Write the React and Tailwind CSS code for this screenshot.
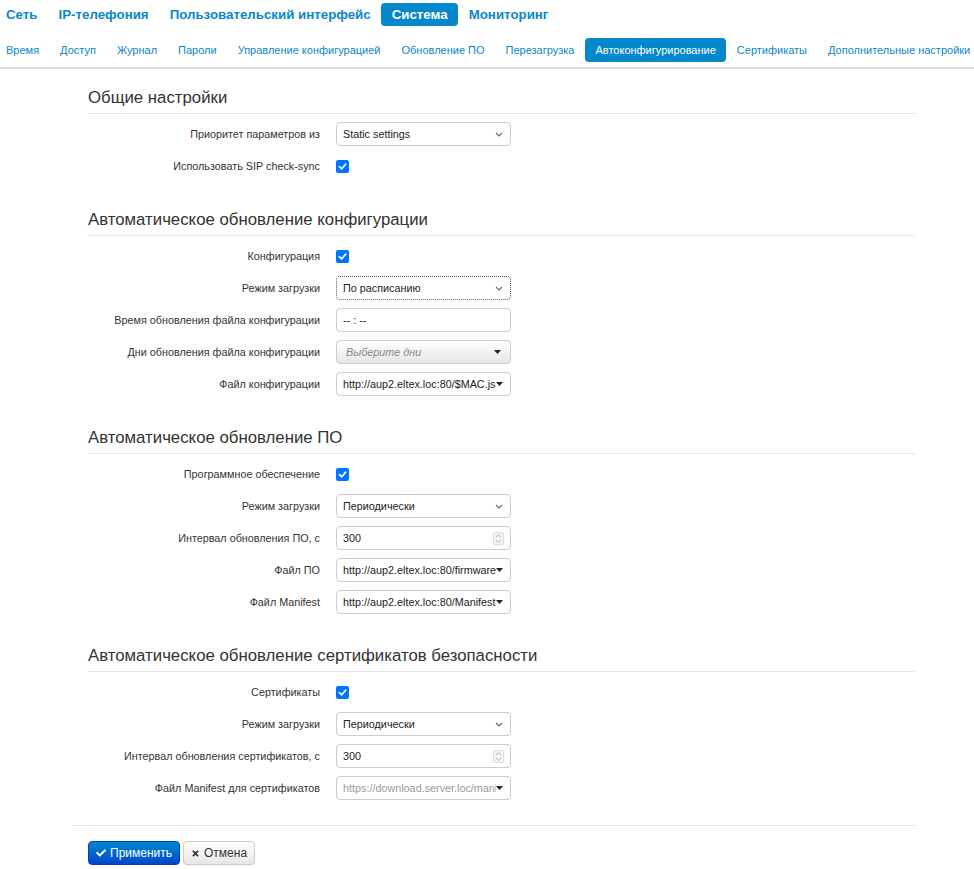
import React from "react";
import { FaCheck, FaTimes } from "react-icons/fa";

const font = { fontFamily: '"Liberation Sans", Arial, sans-serif' };

function Check() {
  return (
    <div className="w-[13px] h-[13px] rounded-[2px] bg-[#0075ff] flex items-center justify-center">
      <svg width="9" height="9" viewBox="0 0 10 10">
        <path d="M1.5 5.2 L4 7.6 L8.6 2.4" fill="none" stroke="white" strokeWidth="1.8" strokeLinecap="round" strokeLinejoin="round" />
      </svg>
    </div>
  );
}

function Chevron() {
  return (
    <svg width="8" height="5" viewBox="0 0 8 5" className="shrink-0">
      <path d="M1 1 L4 4 L7 1" fill="none" stroke="#666" strokeWidth="1.1" />
    </svg>
  );
}

function Caret() {
  return (
    <svg width="7" height="4" viewBox="0 0 7 4" className="shrink-0">
      <path d="M0 0 L7 0 L3.5 4 Z" fill="#222" />
    </svg>
  );
}

function Select({ value, dotted }) {
  return (
    <div
      className={
        "w-[175px] h-[24px] rounded-[4px] bg-white flex items-center pl-[6px] pr-[7px] justify-between text-[10.8px] text-[#222] " +
        (dotted ? "border border-dotted border-[#555]" : "border border-[#ccc]")
      }
    >
      <span>{value}</span>
      <Chevron />
    </div>
  );
}

function FileSelect({ value, muted }) {
  return (
    <div className="w-[175px] h-[24px] rounded-[4px] bg-white border border-[#ccc] flex items-center pl-[6px] pr-[7px] text-[10.8px]">
      <span className={"flex-1 min-w-0 overflow-hidden whitespace-nowrap " + (muted ? "text-[#999]" : "text-[#222]")}>{value}</span>
      <Caret />
    </div>
  );
}

function TextInput({ value }) {
  return (
    <div className="w-[175px] h-[24px] rounded-[4px] bg-white border border-[#ccc] flex items-center pl-[6px] text-[10.8px] text-[#222]">
      {value}
    </div>
  );
}

function NumberInput({ value }) {
  return (
    <div className="w-[175px] h-[24px] rounded-[4px] bg-white border border-[#ccc] flex items-center pl-[6px] pr-[6px] justify-between text-[10.8px] text-[#222]">
      <span>{value}</span>
      <svg width="11" height="13" viewBox="0 0 11 13">
        <rect x="0.5" y="0.5" width="10" height="12" rx="1.5" fill="#f3f3f3" stroke="#ddd" />
        <path d="M3 5 L5.5 2.8 L8 5" fill="none" stroke="#aaa" strokeWidth="0.9" />
        <path d="M3 8 L5.5 10.2 L8 8" fill="none" stroke="#aaa" strokeWidth="0.9" />
      </svg>
    </div>
  );
}

function DaysButton() {
  return (
    <div className="w-[175px] h-[24px] rounded-[4px] border border-[#ccc] bg-gradient-to-b from-[#ffffff] to-[#e6e6e6] flex items-center pl-[9px] pr-[9px] justify-between text-[10.8px]">
      <span className="italic text-[#888]">Выберите дни</span>
      <Caret />
    </div>
  );
}

function Row({ label, children }) {
  return (
    <div className="flex items-center h-[32px]">
      <div className="w-[232px] text-right text-[10.8px] text-[#333]">{label}</div>
      <div className="ml-[16px] flex items-center">{children}</div>
    </div>
  );
}

function Section({ title, children, first }) {
  return (
    <div className={first ? "" : "mt-[27px]"}>
      <div className="text-[16.8px] leading-[20px] text-[#333] pt-[1px] pb-[5px] border-b border-[#e5e5e5]">{title}</div>
      <div className="mt-[4px]">{children}</div>
    </div>
  );
}

export default function App() {
  const top = ["Сеть", "IP-телефония", "Пользовательский интерфейс", "Система", "Мониторинг"];
  const sub = [
    "Время",
    "Доступ",
    "Журнал",
    "Пароли",
    "Управление конфигурацией",
    "Обновление ПО",
    "Перезагрузка",
    "Автоконфигурирование",
    "Сертификаты",
    "Дополнительные настройки",
  ];
  return (
    <div className="w-[974px] min-h-[869px] bg-white" style={font}>
      <div className="border-b-2 border-[#dddddd] pb-[5px]">
        <div className="flex pl-[6px] pt-[3px]">
          {top.map((t, i) => (
            <div
              key={t}
              className={
                "h-[23px] flex items-center text-[13.3px] font-bold px-[10.5px] rounded-[4px] whitespace-nowrap " +
                (i === 0 ? "pl-0 " : "") +
                (t === "Система" ? "bg-[#0587cc] text-white" : "text-[#0a87c9]")
              }
            >
              {t}
            </div>
          ))}
        </div>
        <div className="flex pl-[6px] mt-[12px]">
          {sub.map((t, i) => (
            <div
              key={t}
              className={
                "h-[24px] flex items-center text-[11px] px-[10.5px] rounded-[4px] whitespace-nowrap " +
                (i === 0 ? "pl-0 " : "") +
                (t === "Автоконфигурирование" ? "bg-[#0587cc] text-white" : "text-[#0a87c9]")
              }
            >
              {t}
            </div>
          ))}
        </div>
      </div>

      <div className="ml-[72px] w-[843px] pt-[18px]">
        <div className="pl-[16px]">
          <Section title="Общие настройки" first>
            <Row label="Приоритет параметров из">
              <Select value="Static settings" />
            </Row>
            <Row label="Использовать SIP check-sync">
              <Check />
            </Row>
          </Section>

          <Section title="Автоматическое обновление конфигурации">
            <Row label="Конфигурация">
              <Check />
            </Row>
            <Row label="Режим загрузки">
              <Select value="По расписанию" dotted />
            </Row>
            <Row label="Время обновления файла конфигурации">
              <TextInput value="-- : --" />
            </Row>
            <Row label="Дни обновления файла конфигурации">
              <DaysButton />
            </Row>
            <Row label="Файл конфигурации">
              <FileSelect value="http://aup2.eltex.loc:80/$MAC.json" />
            </Row>
          </Section>

          <Section title="Автоматическое обновление ПО">
            <Row label="Программное обеспечение">
              <Check />
            </Row>
            <Row label="Режим загрузки">
              <Select value="Периодически" />
            </Row>
            <Row label="Интервал обновления ПО, с">
              <NumberInput value="300" />
            </Row>
            <Row label="Файл ПО">
              <FileSelect value="http://aup2.eltex.loc:80/firmware" />
            </Row>
            <Row label="Файл Manifest">
              <FileSelect value="http://aup2.eltex.loc:80/Manifest" />
            </Row>
          </Section>

          <Section title="Автоматическое обновление сертификатов безопасности">
            <Row label="Сертификаты">
              <Check />
            </Row>
            <Row label="Режим загрузки">
              <Select value="Периодически" />
            </Row>
            <Row label="Интервал обновления сертификатов, с">
              <NumberInput value="300" />
            </Row>
            <Row label="Файл Manifest для сертификатов">
              <FileSelect value="https://download.server.loc/manifest" muted />
            </Row>
          </Section>
        </div>

        <div className="mt-[21px] border-t border-[#e5e5e5] pt-[15px] pl-[16px] flex gap-[3px]">
          <div className="h-[24px] px-[7px] rounded-[4px] flex items-center gap-[4px] text-[12px] text-white bg-gradient-to-b from-[#0088cc] to-[#0044cc] border border-[#0044aa]">
            <FaCheck className="w-[10px] h-[10px]" />
            <span>Применить</span>
          </div>
          <div className="h-[24px] px-[7px] rounded-[4px] flex items-center gap-[4px] text-[12px] text-[#333] bg-gradient-to-b from-[#ffffff] to-[#e6e6e6] border border-[#ccc] shadow-[0_1px_2px_rgba(0,0,0,0.05)]">
            <FaTimes className="w-[9px] h-[9px]" />
            <span>Отмена</span>
          </div>
        </div>
      </div>
    </div>
  );
}
